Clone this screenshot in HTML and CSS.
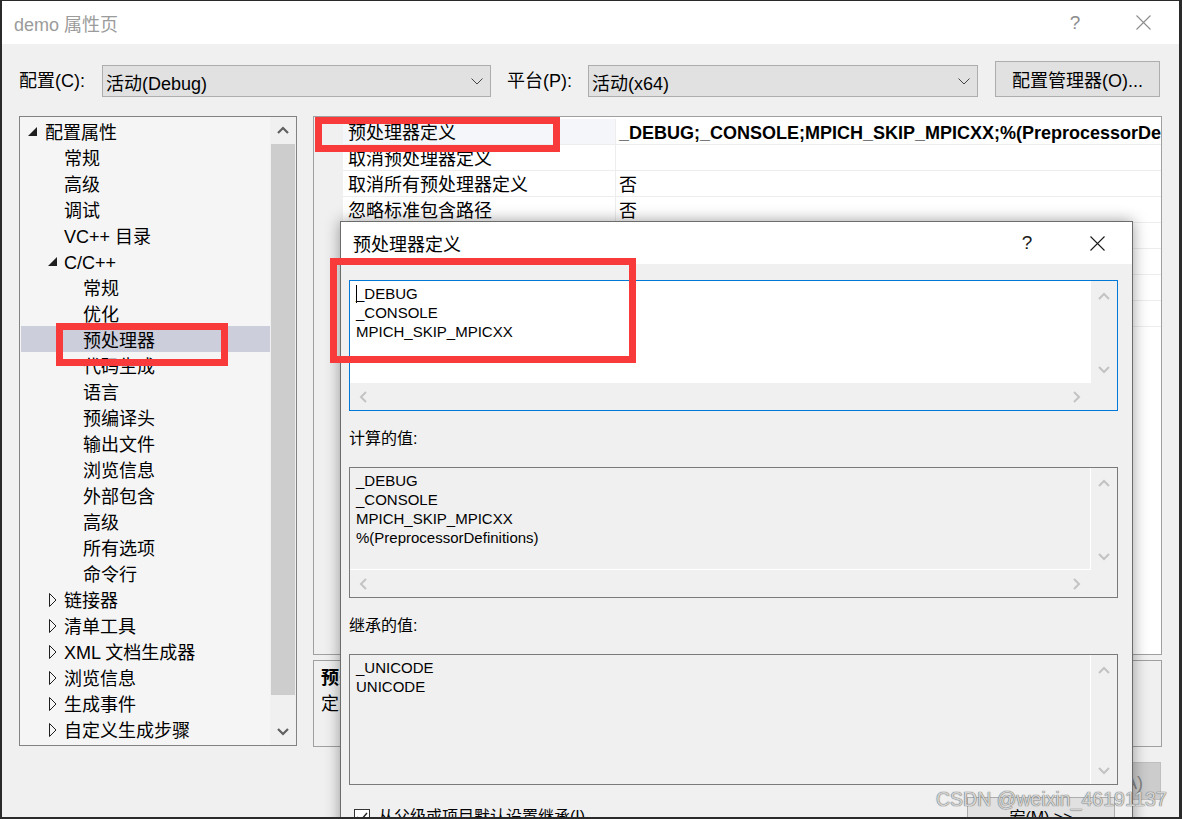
FILE: index.html
```html
<!DOCTYPE html>
<html lang="zh-CN">
<head>
<meta charset="utf-8">
<title>demo 属性页</title>
<link rel="stylesheet" href="styles.css">
</head>
<body>
<div class="window">
  <div class="titlebar">
    <div class="title">demo 属性页</div>
    <div class="tb-btn tb-help">?</div>
    <div class="tb-btn tb-close"><svg width="15" height="15" viewBox="0 0 15 15"><path d="M0.5 0.5 L14.5 14.5 M14.5 0.5 L0.5 14.5" stroke="#8c8c8c" stroke-width="1.1" fill="none"/></svg></div>
  </div>

  <div class="configbar">
    <div class="cfg-label cfg-label1">配置(C):</div>
    <div class="combo combo1"><span class="combo-text">活动(Debug)</span><svg class="combo-arrow" width="12" height="7" viewBox="0 0 12 7"><path d="M0.5 0.5 L6 6 L11.5 0.5" fill="none" stroke="#444" stroke-width="1"/></svg></div>
    <div class="cfg-label cfg-label2">平台(P):</div>
    <div class="combo combo2"><span class="combo-text">活动(x64)</span><svg class="combo-arrow" width="12" height="7" viewBox="0 0 12 7"><path d="M0.5 0.5 L6 6 L11.5 0.5" fill="none" stroke="#444" stroke-width="1"/></svg></div>
    <div class="btn btn-manager">配置管理器(O)...</div>
  </div>

  <div class="main">
    <div class="tree">
      <div class="tree-list">
        <div class="trow l0"><span class="tw"><svg class="tw-exp" width="9" height="9" viewBox="0 0 9 9"><polygon points="9,0 9,9 0,9" fill="#1e1e1e"/></svg></span><span class="tl">配置属性</span></div>
        <div class="trow l1"><span class="tw"></span><span class="tl">常规</span></div>
        <div class="trow l1"><span class="tw"></span><span class="tl">高级</span></div>
        <div class="trow l1"><span class="tw"></span><span class="tl">调试</span></div>
        <div class="trow l1"><span class="tw"></span><span class="tl">VC++ 目录</span></div>
        <div class="trow l1"><span class="tw"><svg class="tw-exp tw-exp1" width="9" height="9" viewBox="0 0 9 9"><polygon points="9,0 9,9 0,9" fill="#1e1e1e"/></svg></span><span class="tl">C/C++</span></div>
        <div class="trow l2"><span class="tw"></span><span class="tl">常规</span></div>
        <div class="trow l2"><span class="tw"></span><span class="tl">优化</span></div>
        <div class="trow l2 sel"><span class="tw"></span><span class="tl">预处理器</span></div>
        <div class="trow l2"><span class="tw"></span><span class="tl">代码生成</span></div>
        <div class="trow l2"><span class="tw"></span><span class="tl">语言</span></div>
        <div class="trow l2"><span class="tw"></span><span class="tl">预编译头</span></div>
        <div class="trow l2"><span class="tw"></span><span class="tl">输出文件</span></div>
        <div class="trow l2"><span class="tw"></span><span class="tl">浏览信息</span></div>
        <div class="trow l2"><span class="tw"></span><span class="tl">外部包含</span></div>
        <div class="trow l2"><span class="tw"></span><span class="tl">高级</span></div>
        <div class="trow l2"><span class="tw"></span><span class="tl">所有选项</span></div>
        <div class="trow l2"><span class="tw"></span><span class="tl">命令行</span></div>
        <div class="trow l1"><span class="tw"><svg class="tw-col" width="8" height="14" viewBox="0 0 8 14"><polygon points="0.5,0.5 7,7 0.5,13.5" fill="none" stroke="#1e1e1e" stroke-width="1"/></svg></span><span class="tl">链接器</span></div>
        <div class="trow l1"><span class="tw"><svg class="tw-col" width="8" height="14" viewBox="0 0 8 14"><polygon points="0.5,0.5 7,7 0.5,13.5" fill="none" stroke="#1e1e1e" stroke-width="1"/></svg></span><span class="tl">清单工具</span></div>
        <div class="trow l1"><span class="tw"><svg class="tw-col" width="8" height="14" viewBox="0 0 8 14"><polygon points="0.5,0.5 7,7 0.5,13.5" fill="none" stroke="#1e1e1e" stroke-width="1"/></svg></span><span class="tl">XML 文档生成器</span></div>
        <div class="trow l1"><span class="tw"><svg class="tw-col" width="8" height="14" viewBox="0 0 8 14"><polygon points="0.5,0.5 7,7 0.5,13.5" fill="none" stroke="#1e1e1e" stroke-width="1"/></svg></span><span class="tl">浏览信息</span></div>
        <div class="trow l1"><span class="tw"><svg class="tw-col" width="8" height="14" viewBox="0 0 8 14"><polygon points="0.5,0.5 7,7 0.5,13.5" fill="none" stroke="#1e1e1e" stroke-width="1"/></svg></span><span class="tl">生成事件</span></div>
        <div class="trow l1"><span class="tw"><svg class="tw-col" width="8" height="14" viewBox="0 0 8 14"><polygon points="0.5,0.5 7,7 0.5,13.5" fill="none" stroke="#1e1e1e" stroke-width="1"/></svg></span><span class="tl">自定义生成步骤</span></div>
      </div>
      <div class="vscroll">
        <div class="sb-btn"><svg width="12" height="8" viewBox="0 0 12 8"><path d="M1 7 L6 2 L11 7" fill="none" stroke="#606060" stroke-width="2.2"/></svg></div>
        <div class="sb-track"><div class="sb-thumb"></div></div>
        <div class="sb-btn"><svg width="12" height="8" viewBox="0 0 12 8"><path d="M1 1 L6 6 L11 1" fill="none" stroke="#606060" stroke-width="2.2"/></svg></div>
      </div>
    </div>

    <div class="rightcol">
      <div class="pgrid">
        <div class="gutter"></div>
        <div class="prows">
          <div class="prow psel"><div class="pname">预处理器定义</div><div class="pval pbold">_DEBUG;_CONSOLE;MPICH_SKIP_MPICXX;%(PreprocessorDefinitions)</div></div>
          <div class="prow"><div class="pname">取消预处理器定义</div><div class="pval"></div></div>
          <div class="prow"><div class="pname">取消所有预处理器定义</div><div class="pval">否</div></div>
          <div class="prow"><div class="pname">忽略标准包含路径</div><div class="pval">否</div></div>
          <div class="prow"><div class="pname">预处理到文件</div><div class="pval">否</div></div>
          <div class="prow"><div class="pname">预处理取消显示行号</div><div class="pval">否</div></div>
          <div class="prow"><div class="pname">保留注释</div><div class="pval">否</div></div>
          <div class="prow"><div class="pname">使用标准符合性预处理器</div><div class="pval"></div></div>
        </div>
      </div>
      <div class="desc">
        <div class="desc-title">预处理器定义</div>
        <div class="desc-text">定义源文件的预处理符号。</div>
      </div>
    </div>
  </div>

  <div class="footer">
    <div class="btn fbtn">确定</div>
    <div class="btn fbtn">取消</div>
    <div class="btn fbtn fbtn-off">应用(A)</div>
  </div>

  <div class="dialog">
    <div class="dlg-title">
      <div class="title dlg-name">预处理器定义</div>
      <div class="tb-btn dlg-help">?</div>
      <div class="tb-btn dlg-close"><svg width="15" height="15" viewBox="0 0 15 15"><path d="M0.5 0.5 L14.5 14.5 M14.5 0.5 L0.5 14.5" stroke="#1a1a1a" stroke-width="1.1" fill="none"/></svg></div>
    </div>
    <div class="dlg-body">
      <div class="edit edit-active">
        <div class="edit-text"><span class="caret"></span>_DEBUG<br>_CONSOLE<br>MPICH_SKIP_MPICXX</div>
        <div class="evs">
          <div class="evs-up"><svg width="12" height="8" viewBox="0 0 12 8"><path d="M1 7 L6 2 L11 7" fill="none" stroke="#c3c3c3" stroke-width="2"/></svg></div>
          <div class="evs-down"><svg width="12" height="8" viewBox="0 0 12 8"><path d="M1 1 L6 6 L11 1" fill="none" stroke="#c3c3c3" stroke-width="2"/></svg></div>
        </div>
        <div class="ehs">
          <svg width="8" height="12" viewBox="0 0 8 12"><path d="M7 1 L2 6 L7 11" fill="none" stroke="#c3c3c3" stroke-width="2"/></svg>
          <svg width="8" height="12" viewBox="0 0 8 12"><path d="M1 1 L6 6 L1 11" fill="none" stroke="#c3c3c3" stroke-width="2"/></svg>
        </div>
        <div class="ecorner"></div>
      </div>

      <div class="dlg-label">计算的值:</div>

      <div class="edit edit-ro">
        <div class="edit-text">_DEBUG<br>_CONSOLE<br>MPICH_SKIP_MPICXX<br>%(PreprocessorDefinitions)</div>
        <div class="evs">
          <div class="evs-up"><svg width="12" height="8" viewBox="0 0 12 8"><path d="M1 7 L6 2 L11 7" fill="none" stroke="#c3c3c3" stroke-width="2"/></svg></div>
          <div class="evs-down"><svg width="12" height="8" viewBox="0 0 12 8"><path d="M1 1 L6 6 L11 1" fill="none" stroke="#c3c3c3" stroke-width="2"/></svg></div>
        </div>
        <div class="ehs">
          <svg width="8" height="12" viewBox="0 0 8 12"><path d="M7 1 L2 6 L7 11" fill="none" stroke="#c3c3c3" stroke-width="2"/></svg>
          <svg width="8" height="12" viewBox="0 0 8 12"><path d="M1 1 L6 6 L1 11" fill="none" stroke="#c3c3c3" stroke-width="2"/></svg>
        </div>
        <div class="ecorner"></div>
      </div>

      <div class="dlg-label">继承的值:</div>

      <div class="edit edit-ro edit-nohs">
        <div class="edit-text">_UNICODE<br>UNICODE</div>
        <div class="evs">
          <div class="evs-up"><svg width="12" height="8" viewBox="0 0 12 8"><path d="M1 7 L6 2 L11 7" fill="none" stroke="#c3c3c3" stroke-width="2"/></svg></div>
          <div class="evs-down"><svg width="12" height="8" viewBox="0 0 12 8"><path d="M1 1 L6 6 L11 1" fill="none" stroke="#c3c3c3" stroke-width="2"/></svg></div>
        </div>
      </div>

      <div class="dlg-bottom">
        <div class="check">
          <span class="check-box"><svg width="14" height="14" viewBox="0 0 14 14"><path d="M2 7 L5.5 10.5 L12 3" fill="none" stroke="#222" stroke-width="1.4"/></svg></span>
          <span class="check-label">从父级或项目默认设置继承(I)</span>
        </div>
        <div class="btn dlg-macro">宏(M) &gt;&gt;</div>
      </div>
    </div>
  </div>

  <div class="mark mark-grid"></div>
  <div class="mark mark-tree"></div>
  <div class="mark mark-edit"></div>
  <div class="watermark">CSDN @weixin_46191137</div>
</div>
</body>
</html>
```

FILE: styles.css
```css
* { box-sizing: border-box; }
html, body { margin: 0; padding: 0; }
body {
  width: 1182px;
  height: 819px;
  overflow: hidden;
  background: #2a2a2a;
  font-family: "Liberation Sans", "Noto Sans CJK SC", sans-serif;
  color: #000;
}
.window {
  position: relative;
  margin: 1px 0 0 2px;
  width: 1177px;
  height: 816px;
  background: #f0f0f0;
  overflow: hidden;
  display: flex;
  flex-direction: column;
}

/* title bar */
.titlebar {
  height: 43px;
  flex: none;
  background: #fff;
  display: flex;
  align-items: center;
  padding-left: 12px;
  padding-right: 13px;
  font-size: 18px;
  color: #9b9b9b;
}
.title { flex: 1; }
.tb-btn {
  width: 46px;
  text-align: center;
  display: flex;
  align-items: center;
  justify-content: center;
}
.tb-help { margin-right: 22px; font-size: 19px; color: #8c8c8c; }

/* config bar */
.configbar {
  height: 72px;
  flex: none;
  display: flex;
  align-items: flex-start;
  padding-left: 17px;
  padding-top: 17px;
  font-size: 18px;
}
.cfg-label { margin-top: 5px; line-height: 31px; }
.cfg-label1 { width: 83px; }
.cfg-label2 { width: 81px; margin-left: 16px; }
.combo {
  margin-top: 4px;
  height: 32px;
  background: #e1e1e1;
  border: 1px solid #adadad;
  display: flex;
  align-items: center;
  padding-left: 3px;
  padding-right: 7px;
  padding-top: 1px;
}
.combo1 { width: 389px; }
.combo2 { width: 390px; }
.combo-text { flex: 1; }
.combo-arrow { flex: none; margin-top: -1px; }
.btn {
  background: #e1e1e1;
  border: 1px solid #adadad;
  display: flex;
  align-items: center;
  justify-content: center;
}
.btn-manager { width: 165px; height: 36px; margin-left: 17px; }

/* main area */
.main {
  height: 631px;
  flex: none;
  display: flex;
  align-items: flex-start;
  padding-left: 17px;
  gap: 16px;
}
.tree {
  width: 278px;
  height: 630px;
  border: 1px solid #828282;
  background: #f5f5f5;
  display: flex;
  font-size: 18px;
}
.tree-list {
  flex: 1;
  padding-top: 1px;
  overflow: hidden;
}
.trow {
  height: 26px;
  display: flex;
  align-items: flex-start;
  white-space: nowrap;
}
.tl { line-height: 26px; padding-top: 2px; }
.trow.l0 { padding-left: 8px; }
.trow.l1 { padding-left: 27px; }
.trow.l2 { padding-left: 46px; }
.trow.sel { background: #cccedb; margin-left: 1px; padding-left: 45px; }
.tw {
  width: 17px;
  height: 26px;
  flex: none;
  display: flex;
  align-items: center;
}
.tw-exp { margin-top: 1px; }
.tw-exp1 { margin-left: 1px; }
.tw-col { margin-left: 2px; margin-top: 1px; }

.vscroll {
  width: 26px;
  flex: none;
  background: #f0f0f0;
  display: flex;
  flex-direction: column;
}
.sb-btn {
  height: 26px;
  flex: none;
  display: flex;
  align-items: center;
  justify-content: center;
}
.sb-track { flex: 1; padding-top: 1px; }
.sb-thumb { height: 551px; background: #cdcdcd; margin: 0 1px; }

.rightcol {
  width: 849px;
  height: 631px;
  display: flex;
  flex-direction: column;
  gap: 5px;
}
.pgrid {
  height: 539px;
  flex: none;
  border: 1px solid #a0a0a0;
  background: #fff;
  display: flex;
  font-size: 18px;
}
.gutter { width: 29px; flex: none; background: #f0f0f0; }
.prows { flex: 1; padding-top: 2px; overflow: hidden; }
.prow {
  height: 26px;
  display: flex;
  border-bottom: 1px solid #ededed;
  white-space: nowrap;
}
.pname { width: 272px; flex: none; padding-left: 5px; padding-top: 2px; line-height: 24px; overflow: hidden; }
.pval { flex: 1; padding-left: 3px; padding-top: 2px; line-height: 24px; border-left: 1px solid #ededed; overflow: hidden; }
.psel .pname { background: #f4f6f9; }
.pbold { font-weight: bold; }

.desc {
  height: 87px;
  flex: none;
  border: 1px solid #a0a0a0;
  background: #f0f0f0;
  padding: 4px 0 0 7px;
  font-size: 18px;
  line-height: 26px;
}
.desc-title { font-weight: bold; }

/* footer */
.footer {
  flex: 1;
  display: flex;
  justify-content: flex-end;
  align-items: flex-start;
  padding-top: 15px;
  padding-right: 18px;
  gap: 10px;
  font-size: 18px;
}
.fbtn { width: 96px; height: 38px; }
.fbtn-off { background: #cccccc; border-color: #bfbfbf; color: #838383; }

/* dialog overlay */
.dialog {
  position: absolute;
  left: 338px;
  top: 220px;
  width: 793px;
  height: 620px;
  background: #f0f0f0;
  border: 1px solid #6c6c6c;
  box-shadow: 0 0 14px rgba(0, 0, 0, 0.38);
  display: flex;
  flex-direction: column;
  z-index: 5;
}
.dlg-title {
  height: 42px;
  flex: none;
  background: #fff;
  display: flex;
  align-items: center;
  padding-left: 12px;
  padding-right: 12px;
  font-size: 18px;
}
.dlg-help { margin-right: 24px; font-size: 19px; color: #1a1a1a; }
.dlg-body { padding: 16px 14px 0 8px; font-size: 16px; }

.edit {
  height: 131px;
  border: 1px solid #7a7a7a;
  display: grid;
  grid-template-columns: 1fr 26px;
  grid-template-rows: 1fr 27px;
  background: #f0f0f0;
}
.edit-active { border-color: #0078d7; }
.edit-text {
  padding: 3px 6px;
  font-size: 15px;
  line-height: 19px;
  white-space: nowrap;
  overflow: hidden;
}
.edit-active .edit-text { background: #fff; }
.edit-ro .edit-text { border-right: 1px solid #fff; border-bottom: 1px solid #fff; }
.edit-nohs { grid-template-rows: 1fr; }
.edit-nohs .edit-text { border-bottom: none; }
.caret {
  display: inline-block;
  width: 1px;
  height: 18px;
  background: #000;
  vertical-align: -4px;
  margin-right: -1px;
}
.evs {
  display: flex;
  flex-direction: column;
  justify-content: space-between;
  align-items: center;
}
.evs-up { height: 30px; display: flex; align-items: center; }
.evs-down { height: 26px; display: flex; align-items: center; }
.ehs {
  display: flex;
  align-items: center;
  justify-content: space-between;
  padding: 0 10px 0 9px;
}
.dlg-label {
  height: 56px;
  padding-top: 18px;
  line-height: 20px;
  font-size: 16px;
}
.dlg-bottom {
  margin-top: 12px;
  display: flex;
  justify-content: space-between;
  align-items: flex-start;
}
.check {
  margin-top: 10px;
  margin-left: 5px;
  display: flex;
  align-items: center;
}
.check-box {
  width: 16px;
  height: 16px;
  border: 1px solid #333;
  background: #fff;
  display: flex;
  align-items: center;
  justify-content: center;
}
.check-label { margin-left: 8px; line-height: 20px; }
.dlg-macro { width: 148px; height: 38px; margin-right: 3px; font-size: 16px; }

/* red annotation boxes */
.mark {
  position: absolute;
  border: 7px solid #f83a3a;
  z-index: 10;
}
.mark-grid { left: 313px; top: 116px; width: 245px; height: 35px; }
.mark-tree { left: 54px; top: 322px; width: 172px; height: 43px; }
.mark-edit { left: 328px; top: 257px; width: 306px; height: 105px; }

.watermark {
  position: absolute;
  left: 934px;
  top: 787px;
  font-size: 19.5px;
  color: #d3d3d3;
  text-shadow: 0 0 1px #6a6a6a, 0 0 1px #6a6a6a;
  white-space: nowrap;
  z-index: 11;
}
```
